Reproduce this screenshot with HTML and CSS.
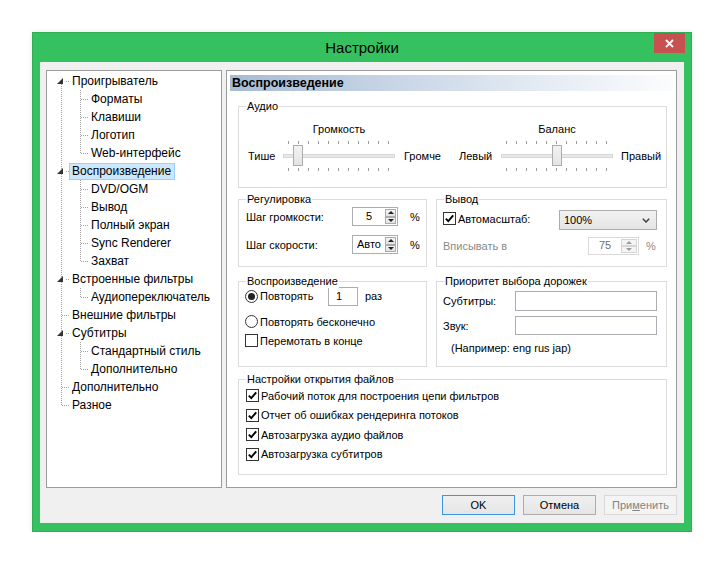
FILE: index.html
```html
<!DOCTYPE html>
<html lang="ru">
<head>
<meta charset="utf-8">
<title>Настройки</title>
<link rel="stylesheet" href="styles.css">
</head>
<body>
<div class="window">
  <div class="titlebar">
    <div class="title">Настройки</div>
    <div class="close"><svg width="9" height="9" viewBox="0 0 9 9"><path d="M1 1 L8 8 M8 1 L1 8" stroke="#fff" stroke-width="1.8" fill="none"/></svg></div>
  </div>
  <div class="client">
    <div class="panes">
      <div class="tree">
        <div class="row t-first"><svg class="tri" width="6" height="6" viewBox="0 0 6 6"><polygon points="6,0 6,6 0,6" fill="#333"/></svg><span class="lbl">Проигрыватель</span></div>
        <div class="row t-c"><span class="lbl">Форматы</span></div>
        <div class="row t-c"><span class="lbl">Клавиши</span></div>
        <div class="row t-c"><span class="lbl">Логотип</span></div>
        <div class="row t-clast"><span class="lbl">Web-интерфейс</span></div>
        <div class="row t-exp"><svg class="tri" width="6" height="6" viewBox="0 0 6 6"><polygon points="6,0 6,6 0,6" fill="#333"/></svg><span class="lbl sel">Воспроизведение</span></div>
        <div class="row t-c"><span class="lbl">DVD/OGM</span></div>
        <div class="row t-c"><span class="lbl">Вывод</span></div>
        <div class="row t-c"><span class="lbl">Полный экран</span></div>
        <div class="row t-c"><span class="lbl">Sync Renderer</span></div>
        <div class="row t-clast"><span class="lbl">Захват</span></div>
        <div class="row t-exp"><svg class="tri" width="6" height="6" viewBox="0 0 6 6"><polygon points="6,0 6,6 0,6" fill="#333"/></svg><span class="lbl">Встроенные фильтры</span></div>
        <div class="row t-clast"><span class="lbl">Аудиопереключатель</span></div>
        <div class="row t-leaf"><span class="lbl">Внешние фильтры</span></div>
        <div class="row t-exp"><svg class="tri" width="6" height="6" viewBox="0 0 6 6"><polygon points="6,0 6,6 0,6" fill="#333"/></svg><span class="lbl">Субтитры</span></div>
        <div class="row t-c"><span class="lbl">Стандартный стиль</span></div>
        <div class="row t-clast"><span class="lbl">Дополнительно</span></div>
        <div class="row t-leaf"><span class="lbl">Дополнительно</span></div>
        <div class="row t-last"><span class="lbl">Разное</span></div>
      </div>
      <div class="page">
        <div class="page-header">Воспроизведение</div>
        <div class="groups">
          <div class="group g-audio">
            <span class="gtitle">Аудио</span>
            <div class="audio">
              <div class="slider s-vol">
                <span class="cap">Громкость</span>
                <span class="lo">Тише</span>
                <div class="track"><div class="bar"></div><div class="thumb" style="left:10px"></div></div>
                <span class="hi">Громче</span>
              </div>
              <div class="slider s-bal">
                <span class="cap">Баланс</span>
                <span class="lo">Левый</span>
                <div class="track"><div class="bar"></div><div class="thumb" style="left:51px"></div></div>
                <span class="hi">Правый</span>
              </div>
            </div>
          </div>

          <div class="grow g2">
            <div class="group g-left">
              <span class="gtitle">Регулировка</span>
              <div class="reg">
                <span>Шаг громкости:</span>
                <div class="spin"><span class="val">5</span><span class="sbtns"><i class="up"></i><i class="dn"></i></span></div>
                <span class="pct">%</span>
                <span>Шаг скорости:</span>
                <div class="spin"><span class="val">Авто</span><span class="sbtns"><i class="up"></i><i class="dn"></i></span></div>
                <span class="pct">%</span>
              </div>
            </div>
            <div class="group g-right">
              <span class="gtitle">Вывод</span>
              <div class="out">
                <label class="chk c-auto"><span class="cb"><svg width="11" height="11" viewBox="0 0 11 11"><polyline points="1.8,5.6 4.3,8.2 9.2,2.4" fill="none" stroke="#000" stroke-width="1.9"/></svg></span>Автомасштаб:</label>
                <div class="combo"><span>100%</span><svg width="8" height="5" viewBox="0 0 8 5"><polyline points="0.8,0.8 4,4 7.2,0.8" fill="none" stroke="#404040" stroke-width="1.5"/></svg></div>
                <span class="dis">Вписывать в</span>
                <div class="fit"><div class="spin dspin"><span class="val">75</span><span class="sbtns"><i class="up"></i><i class="dn"></i></span></div><span class="pct dis">%</span></div>
              </div>
            </div>
          </div>

          <div class="grow g3">
            <div class="group g-left">
              <span class="gtitle">Воспроизведение</span>
              <div class="play">
                <div class="prow p1"><label class="rad"><span class="rb on"></span>Повторять</label><span class="edit e-count">1</span><span class="raz">раз</span></div>
                <div class="prow p2"><label class="rad"><span class="rb"></span>Повторять бесконечно</label></div>
                <div class="prow p3"><label class="chk"><span class="cb"></span>Перемотать в конце</label></div>
              </div>
            </div>
            <div class="group g-right">
              <span class="gtitle">Приоритет выбора дорожек</span>
              <div class="prio">
                <span>Субтитры:</span><span class="edit e-lang"></span>
                <span>Звук:</span><span class="edit e-lang e-lang2"></span>
                <span class="eg">(Например: eng rus jap)</span>
              </div>
            </div>
          </div>

          <div class="group g-files">
            <span class="gtitle">Настройки открытия файлов</span>
            <div class="files">
              <label class="chk"><span class="cb"><svg width="11" height="11" viewBox="0 0 11 11"><polyline points="1.8,5.6 4.3,8.2 9.2,2.4" fill="none" stroke="#000" stroke-width="1.9"/></svg></span>Рабочий поток для построения цепи фильтров</label>
              <label class="chk"><span class="cb"><svg width="11" height="11" viewBox="0 0 11 11"><polyline points="1.8,5.6 4.3,8.2 9.2,2.4" fill="none" stroke="#000" stroke-width="1.9"/></svg></span>Отчет об ошибках рендеринга потоков</label>
              <label class="chk"><span class="cb"><svg width="11" height="11" viewBox="0 0 11 11"><polyline points="1.8,5.6 4.3,8.2 9.2,2.4" fill="none" stroke="#000" stroke-width="1.9"/></svg></span>Автозагрузка аудио файлов</label>
              <label class="chk"><span class="cb"><svg width="11" height="11" viewBox="0 0 11 11"><polyline points="1.8,5.6 4.3,8.2 9.2,2.4" fill="none" stroke="#000" stroke-width="1.9"/></svg></span>Автозагрузка субтитров</label>
            </div>
          </div>
        </div>
      </div>
    </div>
    <div class="buttons">
      <button class="btn def">OK</button>
      <button class="btn">Отмена</button>
      <button class="btn off">При<u>м</u>енить</button>
    </div>
  </div>
</div>
</body>
</html>
```

FILE: styles.css
```css
* { box-sizing: border-box; }
html, body { margin: 0; padding: 0; background: #fff; }
body {
  font-family: "Liberation Sans", Arial, sans-serif;
  font-size: 11px;
  line-height: 16px;
  color: #000;
}

.window {
  margin: 32px 0 0 32px;
  width: 660px;
  height: 500px;
  background: #36c161;
  border: 1px solid #2eae55;
  display: flex;
  flex-direction: column;
  box-shadow: 0 0 5px rgba(0,0,0,0.10);
}
.titlebar {
  height: 29px;
  display: grid;
  grid-template-columns: 1fr auto 1fr;
  align-items: start;
}
.title { grid-column: 2; font-size: 15px; line-height: 29px; }
.close {
  grid-column: 3;
  justify-self: end;
  margin-right: 6px;
  width: 31px;
  height: 20px;
  background: #c75050;
  display: flex;
  align-items: center;
  justify-content: center;
}
.client {
  margin: 0 7px;
  height: 461px;
  background: #f0f0f0;
  padding: 8px 7px 8px 6px;
  display: flex;
  flex-direction: column;
}
.panes { display: flex; gap: 4px; height: 418px; }

/* tree */
.tree {
  width: 176px;
  border: 1px solid #9c9c9c;
  background: #fff;
  padding-top: 1px;
  font-size: 12px;
}
.row {
  height: 18px;
  display: flex;
  align-items: center;
  white-space: nowrap;
  background-repeat: no-repeat;
  padding-left: 22px;
}
.lbl {
  border: 1px solid transparent;
  padding: 0 3px 0 2px;
  height: 17px;
  line-height: 15px;
}
.lbl.sel { background: #cce8ff; border-color: #99d1ff; }
.tri { margin-left: -12px; margin-right: 6px; }
.t-first, .t-exp { padding-left: 22px; }
.t-first {
  background-image:
    repeating-linear-gradient(to bottom, #a0a0a0 0 1px, transparent 1px 2px),
    repeating-linear-gradient(to right, #a0a0a0 0 1px, transparent 1px 2px);
  background-position: 14px 12px, 19px 9px;
  background-size: 1px 6px, 4px 1px;
}
.t-exp {
  background-image:
    repeating-linear-gradient(to bottom, #a0a0a0 0 1px, transparent 1px 2px),
    repeating-linear-gradient(to right, #a0a0a0 0 1px, transparent 1px 2px);
  background-position: 14px 0, 19px 9px;
  background-size: 1px 18px, 4px 1px;
}
.t-leaf {
  background-image:
    repeating-linear-gradient(to bottom, #a0a0a0 0 1px, transparent 1px 2px),
    repeating-linear-gradient(to right, #a0a0a0 0 1px, transparent 1px 2px);
  background-position: 14px 0, 15px 9px;
  background-size: 1px 18px, 8px 1px;
}
.t-last {
  background-image:
    repeating-linear-gradient(to bottom, #a0a0a0 0 1px, transparent 1px 2px),
    repeating-linear-gradient(to right, #a0a0a0 0 1px, transparent 1px 2px);
  background-position: 14px 0, 15px 9px;
  background-size: 1px 10px, 8px 1px;
}
.t-c, .t-clast { padding-left: 41px; }
.t-c {
  background-image:
    repeating-linear-gradient(to bottom, #a0a0a0 0 1px, transparent 1px 2px),
    repeating-linear-gradient(to bottom, #a0a0a0 0 1px, transparent 1px 2px),
    repeating-linear-gradient(to right, #a0a0a0 0 1px, transparent 1px 2px);
  background-position: 14px 0, 33px 0, 34px 9px;
  background-size: 1px 18px, 1px 18px, 8px 1px;
}
.t-clast {
  background-image:
    repeating-linear-gradient(to bottom, #a0a0a0 0 1px, transparent 1px 2px),
    repeating-linear-gradient(to bottom, #a0a0a0 0 1px, transparent 1px 2px),
    repeating-linear-gradient(to right, #a0a0a0 0 1px, transparent 1px 2px);
  background-position: 14px 0, 33px 0, 34px 9px;
  background-size: 1px 18px, 1px 10px, 8px 1px;
}

/* page */
.page {
  width: 451px;
  border: 1px solid #9c9c9c;
  background: #fff;
  padding: 3px 3px 0 3px;
}
.page-header {
  height: 16px;
  margin-top: 1px;
  background: linear-gradient(to right, #a5bbd5 0%, #c6d4e5 35%, #e4ebf3 70%, #fbfcfd 100%);
  font-weight: bold;
  font-size: 12.5px;
  line-height: 16px;
  padding-left: 2px;
}
.groups { margin: 15px 0 0 8px; width: 429px; }
.group {
  position: relative;
  border: 1px solid #dcdcdc;
  background: #fff;
}
.gtitle {
  position: absolute;
  top: -7px;
  left: 7px;
  padding: 0 1px;
  background: #fff;
  line-height: 13px;
  white-space: nowrap;
}
.grow { display: flex; gap: 9px; }
.g-left { width: 189px; }
.g-right { width: 231px; }

/* audio */
.g-audio { height: 82px; }
.audio { display: flex; padding: 14px 0 0 9px; }
.slider {
  display: grid;
  grid-template-rows: 16px 30px;
  row-gap: 4px;
  align-items: center;
  white-space: nowrap;
}
.s-vol { grid-template-columns: 35px 112px 64px; }
.s-bal { grid-template-columns: 42px 112px auto; }
.cap { grid-column: 2; grid-row: 1; text-align: center; }
.lo { grid-column: 1; grid-row: 2; }
.track { grid-column: 2; grid-row: 2; }
.hi { grid-column: 3; grid-row: 2; padding-left: 9px; }
.s-bal .hi { padding-left: 8px; }
.track {
  position: relative;
  height: 30px;
  background-image:
    repeating-linear-gradient(to right, #9a9a9a 0 1px, transparent 1px 10px),
    repeating-linear-gradient(to right, #9a9a9a 0 1px, transparent 1px 10px);
  background-repeat: no-repeat;
  background-size: 101px 3px, 101px 3px;
  background-position: 5px 0, 5px 27px;
}
.bar {
  margin-top: 13px;
  height: 4px;
  border: 1px solid #d6d6d6;
  background: #e7eaea;
}
.thumb {
  position: absolute;
  top: 4px;
  width: 10px;
  height: 21px;
  border: 1px solid #acacac;
  background: linear-gradient(#f2f2f2, #e4e4e4);
}

/* row 2 */
.g2 { margin-top: 11px; }
.g2 .group { height: 68px; }
.reg {
  display: grid;
  grid-template-columns: 106px 46px auto;
  row-gap: 9px;
  align-items: center;
  padding: 7px 0 0 7px;
  white-space: nowrap;
}
.pct { padding-left: 12px; }
.spin {
  display: flex;
  width: 46px;
  height: 19px;
  border: 1px solid #abadb3;
  background: #fff;
}
.spin .val { flex: 1; text-align: center; line-height: 16px; }
.sbtns {
  width: 12px;
  display: flex;
  flex-direction: column;
  padding: 1px 1px 1px 0;
}
.sbtns i {
  flex: 1;
  border: 1px solid #acacac;
  background: linear-gradient(#f4f4f4, #e2e2e2);
  display: flex;
  align-items: center;
  justify-content: center;
}
.sbtns i::before {
  content: "";
  border-left: 3px solid transparent;
  border-right: 3px solid transparent;
}
.sbtns .up::before { border-bottom: 3px solid #222; }
.sbtns .dn::before { border-top: 3px solid #222; }

.out {
  display: grid;
  grid-template-columns: 116px 98px;
  row-gap: 7px;
  align-items: center;
  padding: 10px 0 0 6px;
  white-space: nowrap;
}
.c-auto { margin-bottom: 3px; gap: 3px; }
.combo {
  height: 20px;
  border: 1px solid #acacac;
  background: linear-gradient(#f2f2f2, #e4e4e4);
  display: flex;
  align-items: center;
  justify-content: space-between;
  padding: 0 6px 0 4px;
}
.dis { color: #8a8a8a; }
.fit { display: flex; align-items: center; padding-left: 29px; }
.fit .pct { padding-left: 7px; }
.dspin { width: 51px; height: 18px; border-color: #d9d9d9; }
.dspin .val { color: #6d6d6d; line-height: 15px; }
.dspin .sbtns { width: 17px; }
.dspin .sbtns i { border-color: #d5d5d5; background: #f4f4f4; }
.dspin .sbtns .up::before { border-bottom-color: #9a9a9a; }
.dspin .sbtns .dn::before { border-top-color: #9a9a9a; }

/* checkbox / radio */
.chk, .rad { display: flex; align-items: center; gap: 2px; white-space: nowrap; }
.cb {
  width: 13px;
  height: 13px;
  border: 1px solid #333;
  background: #fff;
  display: flex;
  align-items: center;
  justify-content: center;
  flex: none;
}
.rb {
  width: 13px;
  height: 13px;
  border: 1px solid #333;
  border-radius: 50%;
  background: #fff;
  display: flex;
  align-items: center;
  justify-content: center;
  flex: none;
}
.rb.on::before {
  content: "";
  width: 7px;
  height: 7px;
  border-radius: 50%;
  background: #222;
}

/* row 3 */
.g3 { margin-top: 14px; }
.g3 .group { height: 86px; }
.play { padding: 4px 0 0 6px; }
.prow { display: flex; align-items: center; }
.p1 { height: 20px; }
.p2 { height: 19px; margin-top: 6px; }
.p3 { height: 19px; }
.p1 .rad { width: 83px; }
.edit {
  display: block;
  border: 1px solid #abadb3;
  background: #fff;
}
.e-count { width: 30px; height: 19px; padding-left: 7px; line-height: 16px; }
.raz { margin-left: 7px; }
.prio {
  display: grid;
  grid-template-columns: 72px 142px;
  row-gap: 5px;
  align-items: center;
  padding: 9px 0 0 6px;
  white-space: nowrap;
}
.e-lang { height: 20px; }
.e-lang2 { height: 19px; }
.eg { grid-column: 1 / span 2; padding-left: 8px; }

/* row 4 */
.g-files { margin-top: 12px; height: 96px; }
.files { display: flex; flex-direction: column; padding: 6px 0 0 7px; }
.files .chk { height: 19px; }
.files .chk:nth-child(even) { height: 20px; }

/* buttons */
.buttons {
  margin-top: 7px;
  display: flex;
  justify-content: flex-end;
  gap: 8px;
}
.btn {
  width: 73px;
  height: 20px;
  padding: 0;
  font: inherit;
  color: #000;
  border: 1px solid #acacac;
  background: linear-gradient(#f0f0f0, #e5e5e5);
}
.btn.def { border-color: #3d95e6; }
.btn.off { background: #f4f4f4; border-color: #d9d9d9; color: #838383; }
.btn u { text-decoration: underline; }
```
